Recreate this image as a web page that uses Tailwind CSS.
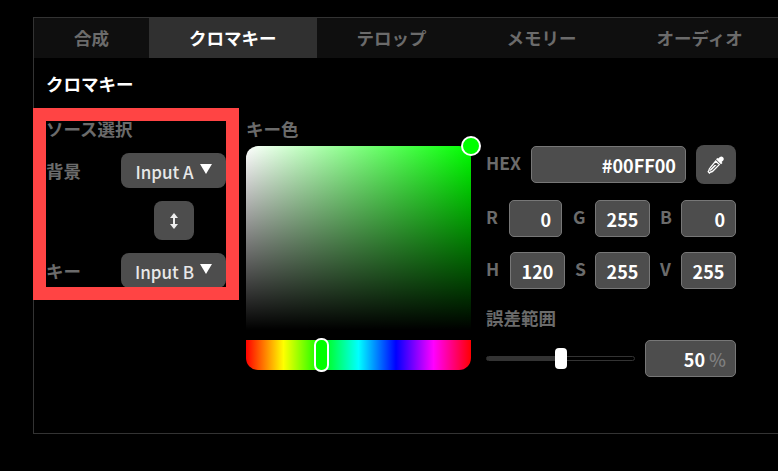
<!DOCTYPE html>
<html lang="ja">
<head>
  <meta charset="UTF-8" />
  <title>クロマキー</title>
  <script src="https://cdn.jsdelivr.net/npm/@tailwindcss/browser@4"></script>
</head>
<body class="relative w-[778px] h-[471px] overflow-hidden bg-black font-['Noto_Sans_CJK_JP','Noto_Sans',sans-serif]">

  <div class="ml-[33px] mt-[17px] inline-block w-[760px] h-[417px] border border-[#333] overflow-hidden align-top">
    <!-- tabs -->
    <div class="flex h-[40px] bg-[#0f0f0f] text-[17.5px] leading-[40px] font-bold text-[#6b6b6b] whitespace-nowrap">
      <div class="px-10">合成</div>
      <div class="px-10 bg-[#303030] text-white">クロマキー</div>
      <div class="px-10">テロップ</div>
      <div class="px-10">メモリー</div>
      <div class="px-10">オーディオ</div>
    </div>

    <div class="pl-[12px] pt-[13px]">
      <h2 class="text-[17.5px] leading-[26px] font-bold text-white">クロマキー</h2>

      <div class="flex mt-[19px]">
        <!-- source -->
        <div class="w-[180px] shrink-0 text-[17.5px] font-bold text-[#6b6b6b]">
          <div class="leading-[26px] h-[26px]">ソース選択</div>
          <div class="flex items-center justify-between mt-[11px]">
            <span class="pt-[1px]">背景</span>
            <button class="flex items-center justify-center gap-[6px] w-[105px] h-[35px] pt-[2px] rounded-lg bg-[#4d4d4d] text-[17px] font-medium text-[#e8e8e8]">Input A <span class="w-0 h-0 -mt-[6px] border-x-[6px] border-x-transparent border-t-[10px] border-t-white"></span></button>
          </div>
          <div class="flex justify-center pl-[75px] mt-[13px]">
            <button class="flex items-center justify-center w-[40px] h-[39px] rounded-lg bg-[#4d4d4d]">
              <svg width="12" height="16" viewBox="0 0 12 16" fill="none" stroke="#eee" stroke-width="2"><path d="M6 3v10"/><path d="M6 0 10 5H2z" fill="#eee" stroke="none"/><path d="M6 16l4-5H2z" fill="#eee" stroke="none"/></svg>
            </button>
          </div>
          <div class="flex items-center justify-between mt-[13px]">
            <span class="pt-[1px]">キー</span>
            <button class="flex items-center justify-center gap-[6px] w-[105px] h-[35px] pt-[2px] rounded-lg bg-[#4d4d4d] text-[17px] font-medium text-[#e8e8e8]">Input B <span class="w-0 h-0 -mt-[6px] border-x-[6px] border-x-transparent border-t-[10px] border-t-white"></span></button>
          </div>
        </div>

        <!-- key colour picker -->
        <div class="w-[225px] shrink-0 ml-[20px]">
          <div class="text-[17.5px] leading-[26px] h-[26px] font-bold text-[#6b6b6b]">キー色</div>
          <div class="relative h-[184px] mt-[4px] rounded-t-[12px] bg-[linear-gradient(to_top,#000,transparent),linear-gradient(to_right,#fff,#0f0)]">
            <span class="absolute -right-[10px] -top-[10px] w-[20px] h-[20px] rounded-full bg-[#0f0] border-2 border-white"></span>
          </div>
          <div class="relative h-[30px] mt-[10px] rounded-b-[12px] bg-[linear-gradient(to_right,#f00,#ff0,#0f0,#0ff,#00f,#f0f,#f00)]">
            <span class="absolute left-[68px] -top-[2px] w-[15px] h-[34px] rounded-[7px] bg-[#0f0] border-2 border-white"></span>
          </div>
        </div>

        <!-- values -->
        <div class="w-[250px] shrink-0 ml-[15px] pt-[29px] text-[17.5px] font-bold text-[#6b6b6b]">
          <div class="flex items-center">
            <span class="w-[45px] -mt-[3px]">HEX</span>
            <div class="w-[155px] h-[37px] rounded-[5px] border border-[#777] bg-[#4d4d4d] text-[18px] text-white text-right pr-[9px] leading-[37px]">#00FF00</div>
            <button class="flex items-center justify-center ml-[10px] w-[40px] h-[39px] rounded-lg bg-[#4d4d4d]">
              <svg width="18" height="18" viewBox="0 0 18 18"><path d="M11.200 2.600 12.900 1a2.400 2.400 0 0 1 3.300 3.400L14.600 6l.9.9-1.500 1.400-5-5 1.400-1.400z" fill="#fff"/><path d="M8.700 5 12.300 8.600 6 15c-.8.8-1.600 1-2.300 1L2.400 17 1.200 15.700 2 14.300c0-.7.2-1.500.9-2.200z" fill="#4d4d4d" stroke="#fff" stroke-width="1.300"/><path d="M3 13.500 7.500 9h2l-5 5.200-1.800.8z" fill="#fff"/></svg>
            </button>
          </div>
          <div class="flex items-center mt-[16px]">
            <span class="w-[23px] -mt-[3px]">R</span>
            <div class="w-[53px] h-[37px] rounded-[5px] border border-[#777] bg-[#4d4d4d] text-[18px] text-white text-right pr-[10px] leading-[37px]">0</div>
            <span class="w-[22px] ml-[11px] -mt-[3px]">G</span>
            <div class="w-[55px] h-[37px] rounded-[5px] border border-[#777] bg-[#4d4d4d] text-[18px] text-white text-center leading-[37px]">255</div>
            <span class="w-[21px] ml-[10px] -mt-[3px]">B</span>
            <div class="w-[55px] h-[37px] rounded-[5px] border border-[#777] bg-[#4d4d4d] text-[18px] text-white text-right pr-[10px] leading-[37px]">0</div>
          </div>
          <div class="flex items-center mt-[15px]">
            <span class="w-[24px] -mt-[3px]">H</span>
            <div class="w-[55px] h-[37px] rounded-[5px] border border-[#777] bg-[#4d4d4d] text-[18px] text-white text-center leading-[37px]">120</div>
            <span class="w-[20px] ml-[10px] -mt-[3px]">S</span>
            <div class="w-[55px] h-[37px] rounded-[5px] border border-[#777] bg-[#4d4d4d] text-[18px] text-white text-center leading-[37px]">255</div>
            <span class="w-[21px] ml-[10px] -mt-[3px]">V</span>
            <div class="w-[55px] h-[37px] rounded-[5px] border border-[#777] bg-[#4d4d4d] text-[18px] text-white text-center leading-[37px]">255</div>
          </div>
          <div class="leading-[26px] mt-[16px]">誤差範囲</div>
          <div class="flex items-center mt-[9px]">
            <div class="relative w-[149px] h-[5px] rounded-full border border-[#333] bg-black">
              <div class="w-[75px] h-full bg-[#333]"></div>
              <span class="absolute left-[68px] -top-[9px] w-[12px] h-[21px] rounded-[4px] bg-white"></span>
            </div>
            <div class="ml-[10px] w-[91px] h-[37px] rounded-[5px] border border-[#777] bg-[#4d4d4d] text-[18px] text-white text-right pr-[9px] leading-[37px]">50 <span class="font-medium text-[#808080]">%</span></div>
          </div>
        </div>
      </div>
    </div>
  </div>

  <!-- annotation -->
  <div class="absolute left-[33px] top-[108px] w-[206px] h-[192px] border-[13px] border-[#ff4444]"></div>
</body>
</html>
